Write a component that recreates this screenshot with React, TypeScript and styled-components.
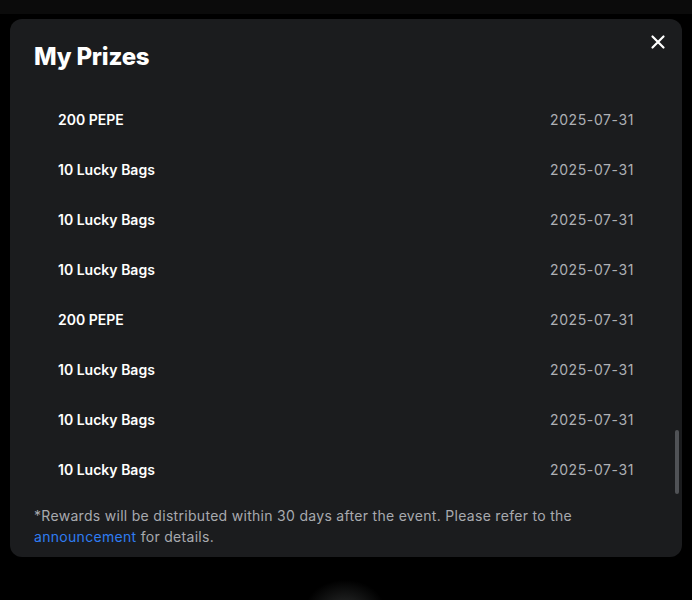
import React, { useEffect, useRef, useState } from "react";
import styled, { createGlobalStyle } from "styled-components";

const GlobalStyle = createGlobalStyle`
  html, body {
    margin: 0;
    padding: 0;
    background: #000;
    font-family: Inter, "Open Sans", sans-serif;
  }
`;

const Backdrop = styled.div`
  width: 692px;
  height: 600px;
  box-sizing: border-box;
  padding: 19px 10px 43px 10px;
  background:
    radial-gradient(ellipse 40px 30px at 345px 610px, rgba(120, 125, 125, 0.35), transparent),
    linear-gradient(#0b0b0b 0 14px, #000 14px);
`;

const Modal = styled.div`
  position: relative;
  height: 100%;
  box-sizing: border-box;
  background: #1b1c1e;
  border-radius: 12px;
  display: flex;
  flex-direction: column;
  padding: 22px 0 10px 0;
`;

const Title = styled.h2`
  margin: 0 0 21px 24px;
  font-size: 24px;
  line-height: 32px;
  font-weight: 800;
  color: #fff;
  letter-spacing: -0.2px;
`;

const CloseButton = styled.button`
  position: absolute;
  top: 15px;
  right: 16px;
  width: 16px;
  height: 16px;
  padding: 0;
  border: none;
  background: none;
  cursor: pointer;
  display: flex;
`;

const ListArea = styled.div`
  position: relative;
  height: 400px;
`;

const PrizeList = styled.div`
  height: 100%;
  overflow-y: auto;
  padding: 0 48px 0 48px;
  scrollbar-width: none;

  &::-webkit-scrollbar {
    display: none;
  }
`;

const ScrollThumb = styled.div`
  position: absolute;
  right: 3px;
  width: 4px;
  border-radius: 2px;
  background: #505256;
`;

const PrizeRow = styled.div`
  height: 50px;
  display: flex;
  align-items: center;
  justify-content: space-between;
`;

const PrizeName = styled.span`
  font-size: 14px;
  font-weight: 600;
  color: #fff;
`;

const PrizeDate = styled.span`
  font-size: 14px;
  color: #aeb0b5;
  letter-spacing: 0.6px;
`;

const Note = styled.p`
  margin: 11px 24px 0 24px;
  max-width: 560px;
  font-size: 14px;
  line-height: 21px;
  color: #a8aaaf;
  letter-spacing: 0.3px;
`;

const Link = styled.a`
  color: #2f7cf2;
  text-decoration: none;
`;

const pattern = ["200 PEPE", "10 Lucky Bags", "10 Lucky Bags", "10 Lucky Bags"];
const prizes = Array.from({ length: 50 }, (_, i) => ({
  name: pattern[(i + 2) % 4],
  date: "2025-07-31",
}));

export default function App() {
  const listRef = useRef<HTMLDivElement>(null);
  const [thumb, setThumb] = useState({ top: 0, height: 0 });

  const updateThumb = () => {
    const el = listRef.current;
    if (!el) return;
    const ratio = el.clientHeight / el.scrollHeight;
    const height = Math.max(el.clientHeight * ratio, 20);
    const max = el.scrollHeight - el.clientHeight;
    const top = max > 0 ? (el.scrollTop / max) * (el.clientHeight - height) : 0;
    setThumb({ top, height });
  };

  useEffect(() => {
    if (listRef.current) {
      listRef.current.scrollTop = listRef.current.scrollHeight;
    }
    updateThumb();
  }, []);

  return (
    <>
      <GlobalStyle />
      <Backdrop>
        <Modal>
          <Title>My Prizes</Title>
          <CloseButton aria-label="Close">
            <svg width="16" height="16" viewBox="0 0 16 16">
              <path d="M2.5 2.5 L13.5 13.5 M13.5 2.5 L2.5 13.5" stroke="#fff" strokeWidth="2.2" strokeLinecap="round" />
            </svg>
          </CloseButton>
          <ListArea>
            <PrizeList ref={listRef} onScroll={updateThumb}>
              {prizes.map((p, i) => (
                <PrizeRow key={i}>
                  <PrizeName>{p.name}</PrizeName>
                  <PrizeDate>{p.date}</PrizeDate>
                </PrizeRow>
              ))}
            </PrizeList>
            <ScrollThumb style={{ top: thumb.top, height: thumb.height }} />
          </ListArea>
          <Note>
            *Rewards will be distributed within 30 days after the event. Please refer to the{" "}
            <Link href="#">announcement</Link> for details.
          </Note>
        </Modal>
      </Backdrop>
    </>
  );
}
